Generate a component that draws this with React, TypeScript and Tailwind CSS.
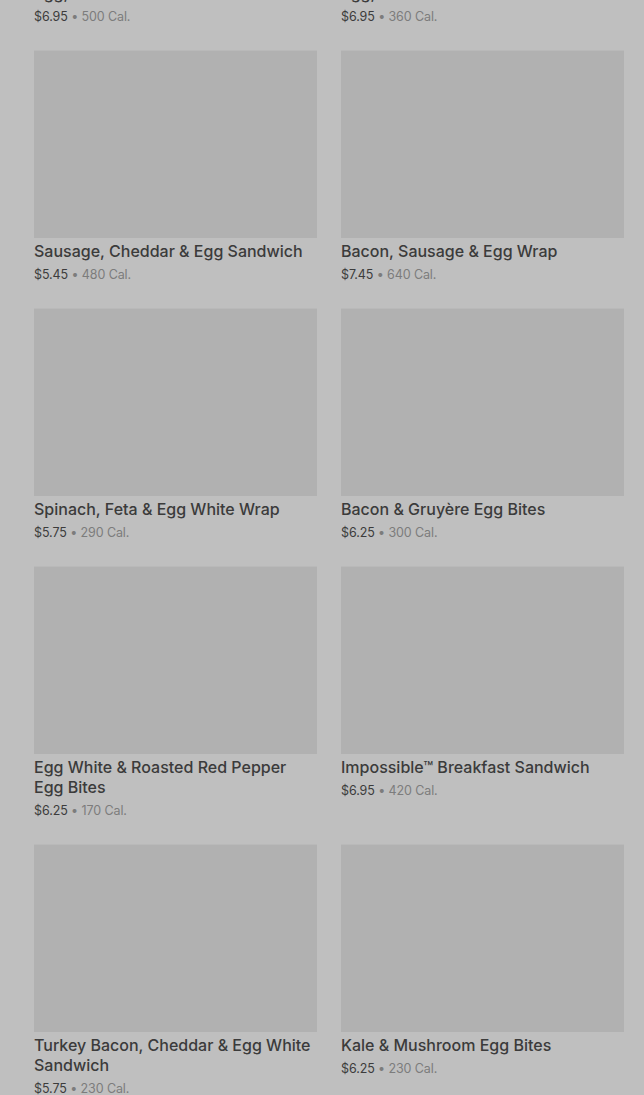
const items = [
  { name: 'Egg, Pesto & Mozzarella Sandwich', price: '$6.95', cal: '500' },
  { name: 'Egg, Bacon & Gouda Sandwich', price: '$6.95', cal: '360' },
  { name: 'Sausage, Cheddar & Egg Sandwich', price: '$5.45', cal: '480' },
  { name: 'Bacon, Sausage & Egg Wrap', price: '$7.45', cal: '640' },
  { name: 'Spinach, Feta & Egg White Wrap', price: '$5.75', cal: '290' },
  { name: 'Bacon & Gruyère Egg Bites', price: '$6.25', cal: '300' },
  { name: 'Egg White & Roasted Red Pepper Egg Bites', price: '$6.25', cal: '170' },
  { name: 'Impossible™ Breakfast Sandwich', price: '$6.95', cal: '420' },
  { name: 'Turkey Bacon, Cheddar & Egg White Sandwich', price: '$5.75', cal: '230' },
  { name: 'Kale & Mushroom Egg Bites', price: '$6.25', cal: '230' }
]

function MenuCard({ name, price, cal }: { name: string; price: string; cal: string }) {
  return (
    <div className="flex flex-col">
      <div className="h-[188px] bg-[#b1b1b1] border-t border-[#b9b9b9]" />
      <h3 className="mt-[3px] text-[16px] leading-[20px] font-medium text-[#3b3b3b]">
        {name}
      </h3>
      <p className="mt-[4px] text-[12.5px] leading-[20px] tracking-[-0.1px] text-[#3c3c3c]">
        {price}
        <span className="text-[#7c7c7c]"> • {cal} Cal.</span>
      </p>
    </div>
  )
}

export default function App() {
  return (
    <div
      className="h-[1095px] overflow-hidden bg-[#bfbfbf]"
      style={{ fontFamily: 'Inter, "Liberation Sans", sans-serif' }}
    >
      <div className="mt-[-208px] grid grid-cols-2 gap-x-[24px] gap-y-[23px] pl-[34px] pr-[20px]">
        {items.map((item, i) => (
          <MenuCard key={i} {...item} />
        ))}
      </div>
    </div>
  )
}
